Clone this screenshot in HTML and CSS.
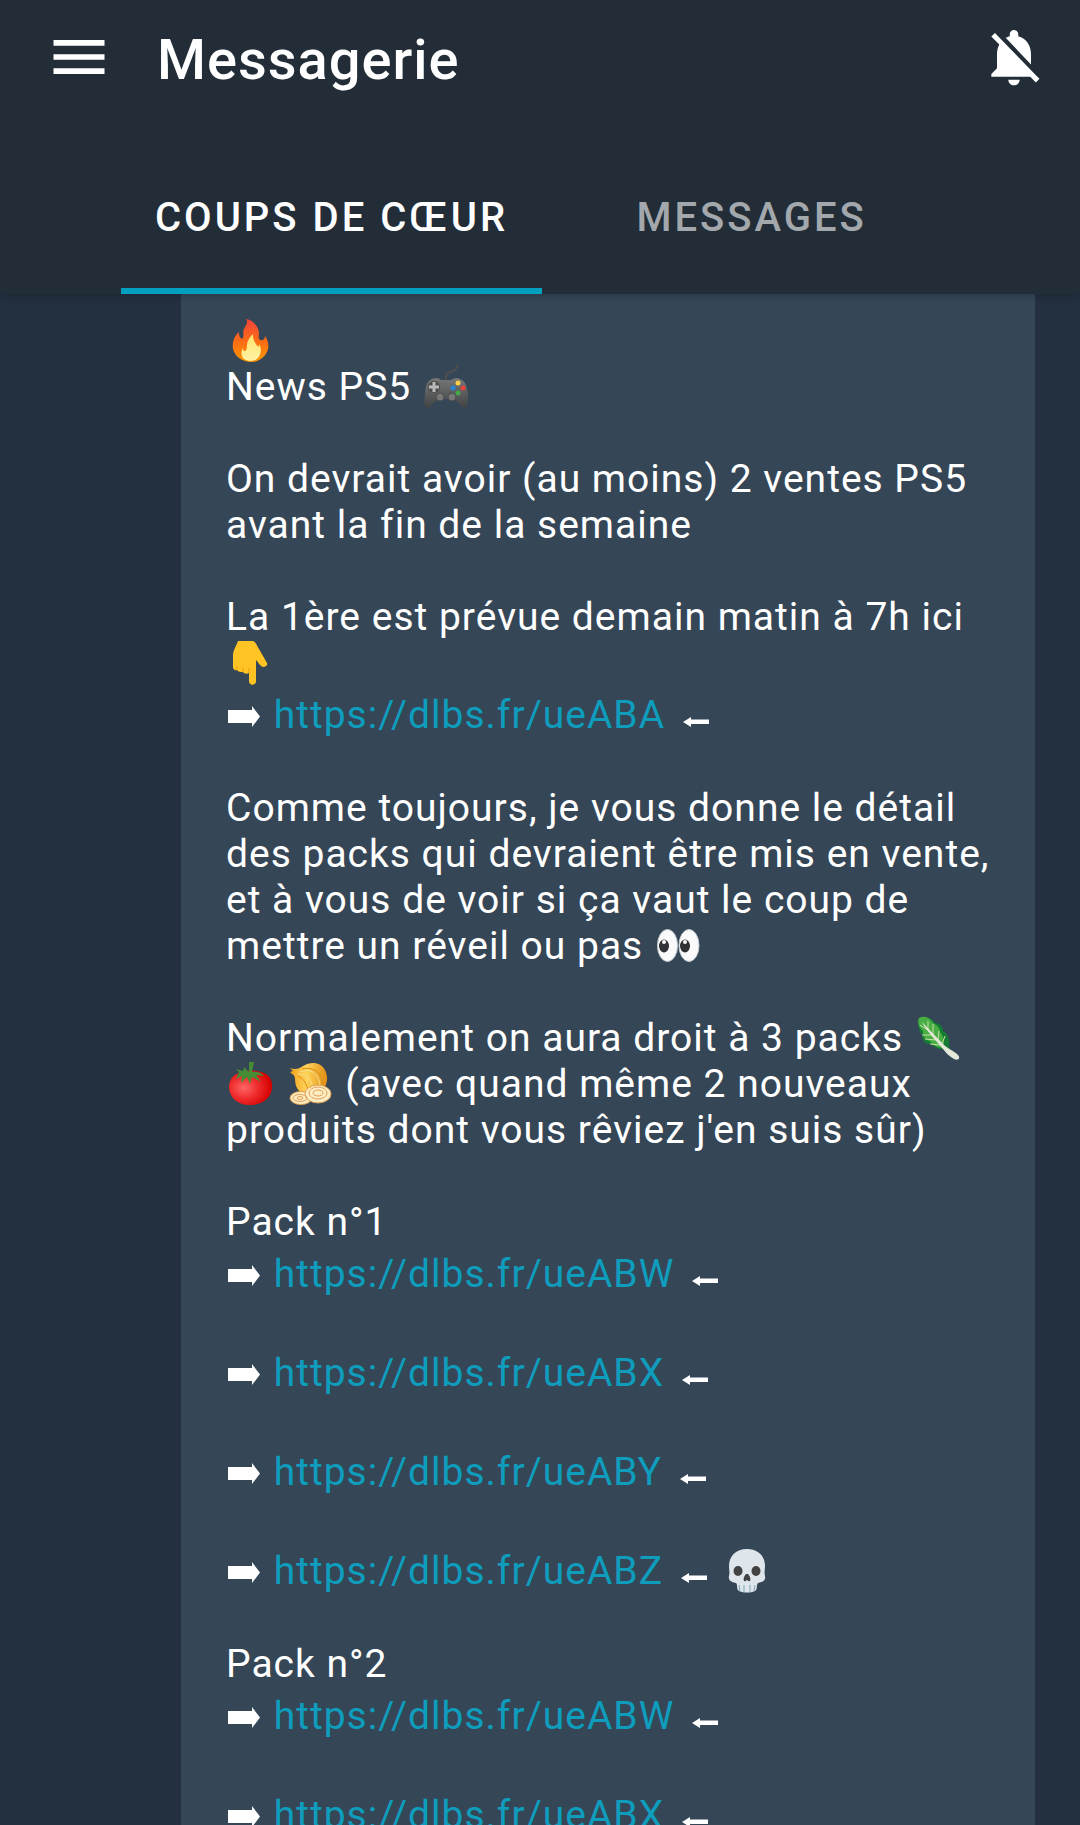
FILE: index.html
```html
<!DOCTYPE html>
<html lang="fr">
<head>
  <meta charset="UTF-8">
  <meta name="viewport" content="width=device-width, initial-scale=1">
  <title>Messagerie</title>
  <link rel="stylesheet" href="styles.css">
</head>
<body>
  <!-- Shared arrows -->
  <svg class="defs" aria-hidden="true">
    <symbol id="arrow-right" viewBox="0 0 37 44">
      <path fill="#fff" d="M2 17h24v-4l8 10.500-8 10.500v-4H2z"/>
    </symbol>
    <symbol id="arrow-left" viewBox="0 0 40 44">
      <path fill="#fff" d="M33 26.500v4.500H15v3L7 29l8-5v2.500z"/>
    </symbol>
  </svg>

  <header>
    <div class="toolbar">
      <button class="icon-btn" aria-label="Menu">
        <svg viewBox="0 0 24 24" fill="currentColor"><path d="M3 18h18v-2H3v2zm0-5h18v-2H3v2zm0-7v2h18V6H3z"/></svg>
      </button>
      <h1>Messagerie</h1>
      <button class="icon-btn" aria-label="Notifications">
        <svg viewBox="0 0 24 24" fill="currentColor"><path d="M20 18.690L7.840 6.140 5.270 3.490 4 4.760l2.800 2.800v.01c-.52.99-.8 2.160-.8 3.420v5l-2 2v1h13.730l2 2L21 19.720l-1-1.030zM12 22c1.110 0 2-.89 2-2h-4c0 1.110.89 2 2 2zm6-7.320V11c0-3.080-1.640-5.640-4.500-6.320V4c0-.83-.67-1.500-1.500-1.500s-1.500.67-1.500 1.500v.68c-.15.030-.29.080-.42.120-.1.030-.2.070-.3.110-.24.090-.48.200-.71.320L18 14.680z"/></svg>
      </button>
    </div>
    <nav class="tabs">
      <button class="tab active">COUPS DE CŒUR</button>
      <button class="tab">MESSAGES</button>
    </nav>
  </header>

  <main>
    <article class="message">
      <p>
        <svg class="emoji" viewBox="0 0 49 44" role="img" aria-label="feu">
          <defs>
            <linearGradient id="flame" x1="0" y1="0" x2="0" y2="1"><stop offset="0" stop-color="#f4423c"/><stop offset=".5" stop-color="#f96a16"/><stop offset="1" stop-color="#ff9800"/></linearGradient>
            <linearGradient id="flame-in" x1="0" y1="0" x2="0" y2="1"><stop offset="0" stop-color="#ffe36b"/><stop offset="1" stop-color="#fff3a5"/></linearGradient>
          </defs>
          <path fill="url(#flame)" d="M20 0c7 1 12 7 13 13 0 4-1 6 1 8 3 1 5-1 5-4 3 4 4 9 3 13-2 8-9 13-17 13S9 38 7 30c-1-7 1-13 6-17 0 4 1 6 3 7 3-3 0-6 2-10 1-3 5-6 2-10z"/>
          <path fill="url(#flame-in)" d="M27 15c0 5 1 7 3 10 1 2 2 3 3 2v-2c3 5 2 10-1 14-4 4-11 4-15 0-2-3-2-7 0-10 0 3 1 3 2 3 3-1 1-6 3-10 1-3 3-5 5-7z"/>
        </svg><br>
        News PS5
        <svg class="emoji" viewBox="0 0 49 44" role="img" aria-label="manette">
          <defs><linearGradient id="pad" x1="0" y1="0" x2="0" y2="1"><stop offset="0" stop-color="#777"/><stop offset="1" stop-color="#404244"/></linearGradient></defs>
          <path fill="none" stroke="#50504f" stroke-width="2" d="M24 15c-1-6 1-7 5-8 3-1 6-2 6-7"/>
          <path fill="url(#pad)" d="M10 14c4-2 7-1 9 1h10c3-2 6-3 9-1 6 2 7 8 8 15 0 7 0 13-3 14-4 0-7-7-11-9H16c-4 2-7 9-11 9-3-1-3-7-2-14 0-7 2-13 7-15z"/>
          <circle cx="12" cy="22" r="6" fill="#4e4e4e"/>
          <path stroke="#b9b9b9" stroke-width="3" d="M7 22h10M12 17v10"/>
          <g fill="#777" stroke="#4b4b4b"><circle cx="18" cy="32" r="4"/><circle cx="30" cy="32" r="4"/></g>
          <circle cx="36" cy="18" r="2.500" fill="#fdcf4a"/><circle cx="31" cy="23" r="2.500" fill="#2386d9"/>
          <circle cx="41" cy="23" r="2.500" fill="#e9433d"/><circle cx="36" cy="28" r="2.500" fill="#46a84b"/>
        </svg>
      </p>

      <p>On devrait avoir (au moins) 2 ventes PS5 avant la fin de la semaine</p>

      <div class="group">
        La 1ère est prévue demain matin à 7h ici
        <svg class="emoji" viewBox="0 0 49 44" role="img" aria-label="doigt vers le bas">
          <path fill="#ffc324" d="M12 0h15c3 1 4 5 6 8l8 14c1 2-1 4-4 4-3-1-5-5-7-7v21c0 5-7 5-7 0v-8c-2 1-5 1-6-1-2 0-5 0-6-2-2 1-4-1-4-3V15c0-6 3-9 5-15z"/>
          <path fill="none" stroke="#e99b13" stroke-width="1" d="M23 32v-5M17 31v-4M11 29v-4"/>
        </svg>
        <div class="link-line"><svg class="arrow" role="img" aria-label="vers la droite"><use href="#arrow-right"/></svg> <a href="https://dlbs.fr/ueABA">https://dlbs.fr/ueABA</a> <svg class="arrow left" role="img" aria-label="vers la gauche"><use href="#arrow-left"/></svg></div>
      </div>

      <p>
        Comme toujours, je vous donne le détail des packs qui devraient être mis en vente, et à vous de voir si ça vaut le coup de mettre un réveil ou pas
        <svg class="emoji" viewBox="0 0 49 44" role="img" aria-label="yeux">
          <g fill="#fafafa" stroke="#c4cbd0" stroke-width="1"><ellipse cx="13.500" cy="21.500" rx="10" ry="16"/><ellipse cx="35" cy="21.500" rx="10" ry="16"/></g>
          <g fill="#303235"><ellipse cx="10" cy="22" rx="5" ry="6.500"/><ellipse cx="31" cy="22" rx="5" ry="6.500"/></g>
          <g fill="#fafafa"><circle cx="10" cy="18" r="2"/><circle cx="31" cy="18" r="2"/></g>
        </svg>
      </p>

      <p>
        Normalement on aura droit à 3 packs
        <svg class="emoji" viewBox="0 0 49 44" role="img" aria-label="salade">
          <path fill="#137b34" d="M5 2c7-3 14 1 16 5 5 0 8 4 8 8 5 3 7 8 6 13l1 6-5-1c-5 1-11-1-14-5-6 1-9-4-9-9-3-3-5-13-3-17z"/>
          <path fill="#48ae43" d="M5 2c6-3 11 0 14 5 4 2 7 5 7 9 4 4 4 9 4 16-7 0-12-3-14-7-6-1-7-6-7-10-4-3-6-9-4-13z"/>
          <path fill="none" stroke="#c7dfa7" stroke-width="1" d="M14 14V5M19 19V8M24 24l1-9M28 28l3-8M14 14L6 9M18 19H8M22 24l-11-1M27 29l-11-1"/>
          <path fill="#e5e7d8" d="M8 6c8 8 15 16 22 23 4 4 9 5 14 10 3 3 0 6-4 4-5-3-8-6-11-10C22 24 13 16 8 6z"/>
        </svg>
        <svg class="emoji" viewBox="0 0 49 44" role="img" aria-label="tomate">
          <defs><radialGradient id="tomato" cx=".35" cy=".5" r=".65"><stop offset="0" stop-color="#ff6666"/><stop offset=".5" stop-color="#ee2b2c"/><stop offset="1" stop-color="#d60000"/></radialGradient></defs>
          <path fill="url(#tomato)" d="M13 11c7-3 15-3 22-1 8 2 12 8 11 16-1 11-11 17-22 17S4 37 3 26c0-7 3-13 10-15z"/>
          <path fill="#458d35" d="M23 0h5l-2 10c4-1 9 0 12 4l-8-1 5 7-9-5-2 7-3-7-6 6 1-7-6 3 3-7-3-3 7 2 1-4 5 5z"/>
        </svg>
        <svg class="emoji" viewBox="0 0 49 44" role="img" aria-label="oignon">
          <defs><linearGradient id="onion"><stop offset="0" stop-color="#f0a01c"/><stop offset=".45" stop-color="#ffd45a"/><stop offset="1" stop-color="#e08c14"/></linearGradient></defs>
          <path fill="url(#onion)" d="M4 6c5 2 9 1 13-2 8-5 18-4 22 4 5 10 1 20-10 25-13 2-20-5-20-16 0-4-3-5-5-7l3-1z"/>
          <path fill="none" stroke="#f7e08e" stroke-width="1" d="M14 10c13-5 20 4 20 16M12 12c10 0 14 7 15 15"/>
          <path fill="none" stroke="#d98a10" stroke-width="1" d="M16 7c14-3 21 6 21 17M12 14c6 3 9 8 10 15"/>
          <g fill="#ffedc2" stroke="#dfa052" stroke-width="1"><ellipse cx="15" cy="36" rx="11" ry="6.500"/><ellipse cx="32" cy="32" rx="13" ry="9"/></g>
          <g fill="none" stroke="#dda05b" stroke-width="1"><ellipse cx="14" cy="36" rx="7" ry="3.500"/><ellipse cx="14" cy="36" rx="3" ry="1.500"/><ellipse cx="32" cy="31" rx="9" ry="6"/><ellipse cx="32" cy="31" rx="5" ry="3"/></g>
        </svg>
        (avec quand même 2 nouveaux produits dont vous rêviez j'en suis sûr)
      </p>

      <div class="group">
        Pack n°1
        <div class="link-line"><svg class="arrow" role="img" aria-label="vers la droite"><use href="#arrow-right"/></svg> <a href="https://dlbs.fr/ueABW">https://dlbs.fr/ueABW</a> <svg class="arrow left" role="img" aria-label="vers la gauche"><use href="#arrow-left"/></svg></div>
      </div>
      <div class="group link-line"><svg class="arrow" role="img" aria-label="vers la droite"><use href="#arrow-right"/></svg> <a href="https://dlbs.fr/ueABX">https://dlbs.fr/ueABX</a> <svg class="arrow left" role="img" aria-label="vers la gauche"><use href="#arrow-left"/></svg></div>
      <div class="group link-line"><svg class="arrow" role="img" aria-label="vers la droite"><use href="#arrow-right"/></svg> <a href="https://dlbs.fr/ueABY">https://dlbs.fr/ueABY</a> <svg class="arrow left" role="img" aria-label="vers la gauche"><use href="#arrow-left"/></svg></div>
      <div class="group link-line"><svg class="arrow" role="img" aria-label="vers la droite"><use href="#arrow-right"/></svg> <a href="https://dlbs.fr/ueABZ">https://dlbs.fr/ueABZ</a> <svg class="arrow left" role="img" aria-label="vers la gauche"><use href="#arrow-left"/></svg>
        <svg class="emoji" viewBox="0 0 49 44" role="img" aria-label="crâne">
          <path fill="#dfe6eb" d="M23 0c11 0 18 7 18 17 0 4-1 6 0 10 1 5-3 6-7 7-2 2 0 6-3 8-5 2-11 2-16 0-3-2-1-6-3-8-4-1-8-2-7-7 1-4 0-6 0-10C5 7 12 0 23 0z"/>
          <g fill="#424242"><ellipse cx="14" cy="22" rx="4.500" ry="5"/><ellipse cx="32" cy="22" rx="4.500" ry="5"/><path d="M22 25h2c2 2 3 5 2 7-2 1-2-1-3-1s-1 2-3 1c-1-2 0-5 2-7z"/></g>
          <path fill="none" stroke="#7fa6b5" stroke-width="1" d="M15 36l1 6M20 36v7M26 36v7M31 36l-1 6"/>
        </svg>
      </div>

      <div class="group">
        Pack n°2
        <div class="link-line"><svg class="arrow" role="img" aria-label="vers la droite"><use href="#arrow-right"/></svg> <a href="https://dlbs.fr/ueABW">https://dlbs.fr/ueABW</a> <svg class="arrow left" role="img" aria-label="vers la gauche"><use href="#arrow-left"/></svg></div>
      </div>
      <div class="group link-line"><svg class="arrow" role="img" aria-label="vers la droite"><use href="#arrow-right"/></svg> <a href="https://dlbs.fr/ueABX">https://dlbs.fr/ueABX</a> <svg class="arrow left" role="img" aria-label="vers la gauche"><use href="#arrow-left"/></svg></div>
    </article>
  </main>
</body>
</html>
```
FILE: styles.css
```css
:root {
  --bg: #233040;
  --bar: #222d38;
  --card: #354657;
  --accent: #039fc0;
  --link: #0f9dbd;
}
* {
  margin: 0;
  padding: 0;
  box-sizing: border-box;
}
body {
  display: flex;
  flex-direction: column;
  height: 100vh;
  background: var(--bg);
  color: #fff;
  font-family: Roboto, sans-serif;
}
button {
  border: none;
  background: none;
  color: inherit;
  font-family: inherit;
  cursor: pointer;
}
.defs {
  display: none;
}
header {
  flex: none;
  background: var(--bar);
  box-shadow: 0 2px 8px rgba(0, 0, 0, 0.2);
  z-index: 1;
}
.toolbar {
  display: flex;
  align-items: center;
  gap: 44px;
  height: 140px;
  padding: 0 32px 26px 45px;
}
.icon-btn {
  flex: none;
  width: 68px;
  height: 68px;
}
.icon-btn svg {
  display: block;
}
h1 {
  flex: 1;
  padding-top: 6px;
  font-size: 56px;
  font-weight: 500;
  line-height: 66px;
  letter-spacing: 1px;
}
.tabs {
  display: flex;
  height: 154px;
  padding-left: 121px;
}
.tab {
  min-width: 419px;
  padding: 0 34px;
  border-top: 6px solid transparent;
  border-bottom: 6px solid transparent;
  color: #a3a8ad;
  font-size: 40px;
  font-weight: 500;
  letter-spacing: 3px;
}
.tab.active {
  border-bottom-color: var(--accent);
  color: #fff;
}
main {
  flex: 1;
  min-height: 0;
  padding: 0 45px 0 181px;
  overflow-y: auto;
  scrollbar-width: none;
}
.message {
  padding: 24px 45px;
  background: var(--card);
  font-size: 39px;
  line-height: 46px;
  letter-spacing: 1px;
}
.message p,
.group {
  margin-bottom: 46px;
}
.link-line {
  padding: 6px 0 1px;
}
.message a {
  color: var(--link);
  text-decoration: none;
}
.emoji {
  width: 49px;
  height: 44px;
  vertical-align: -9px;
}
.arrow {
  width: 37px;
  height: 44px;
  vertical-align: -9px;
}
.arrow.left {
  width: 40px;
}
```
